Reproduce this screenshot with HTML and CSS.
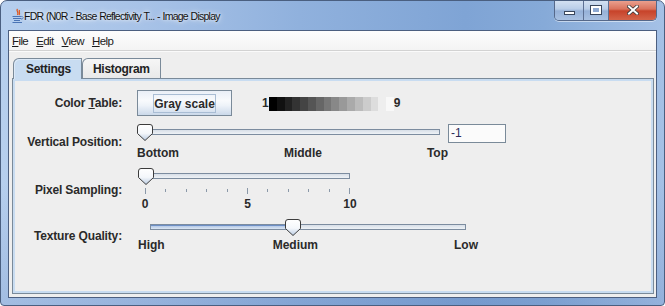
FILE: index.html
```html
<!DOCTYPE html>
<html>
<head>
<meta charset="utf-8">
<title>Image Display</title>
<link rel="stylesheet" href="styles.css">
</head>
<body>
<div class="window">
  <div class="titlebar">
    <svg class="app-icon" width="12" height="16" viewBox="0 0 12 16">
      <path d="M5.5 1 C3.5 3 7.5 4 5.5 7 M7.5 2 C6.5 4 8.5 5 7 7" fill="none" stroke="#e0561b" stroke-width="1.3"/>
      <path d="M0.5 8.5 H9.5 M1 10.5 H9 M2 12.5 H8 M0.5 14.5 H10" stroke="#4a74b5" stroke-width="1.2"/>
      <path d="M9.5 8.5 C12 8.5 12 11 9 11" fill="none" stroke="#4a74b5" stroke-width="1"/>
    </svg>
    <span class="title">FDR (N0R - Base Reflectivity T... - Image Display</span>
    <div class="caption-buttons">
      <div class="cbtn cmin"><span class="g-min"></span></div>
      <div class="cbtn cmax"><span class="g-max"></span></div>
      <div class="cbtn cclose">
        <svg width="12" height="10" viewBox="0 0 12 10">
          <path d="M2 1.5 L10 8.5 M10 1.5 L2 8.5" stroke="#3a3a3a" stroke-width="3.6" stroke-linecap="square"/>
          <path d="M2 1.5 L10 8.5 M10 1.5 L2 8.5" stroke="#ffffff" stroke-width="2" stroke-linecap="square"/>
        </svg>
      </div>
    </div>
  </div>
  <div class="client">
    <div class="menubar">
      <span class="menu"><u>F</u>ile</span>
      <span class="menu"><u>E</u>dit</span>
      <span class="menu"><u>V</u>iew</span>
      <span class="menu"><u>H</u>elp</span>
    </div>
    <div class="tabarea">
      <div class="tabs">
        <div class="tab tab-selected">Settings</div>
        <div class="tab">Histogram</div>
      </div>
      <div class="panel">
        <div class="form">
          <div class="lbl">Color <u>T</u>able:</div>
          <div class="ctrl ct-row">
            <div class="btn"><span class="focus">Gray scale</span></div>
            <span class="num num-1">1</span>
            <div class="scale-bar"></div>
            <span class="num">9</span>
          </div>

          <div class="lbl">Vertical Position:</div>
          <div class="ctrl vpos-row">
            <div class="slider vpos">
              <div class="slider-body">
                <div class="track track-vpos"></div>
                <svg class="thumb" style="left:0px" width="16" height="17" viewBox="0 0 16 17">
                  <defs>
                    <linearGradient id="tg" x1="0" y1="0" x2="0" y2="1">
                      <stop offset="0" stop-color="#ffffff"/>
                      <stop offset="0.55" stop-color="#f4f7fb"/>
                      <stop offset="1" stop-color="#b9cbe2"/>
                    </linearGradient>
                  </defs>
                  <path d="M0.5 3 Q0.5 0.5 3 0.5 H13 Q15.5 0.5 15.5 3 V9.5 L8 16.5 L0.5 9.5 Z" fill="url(#tg)" stroke="#3c3c3c"/>
                </svg>
              </div>
              <div class="slabels spread">
                <span>Bottom</span><span>Middle</span><span>Top</span>
              </div>
            </div>
            <div class="textfield">-1</div>
          </div>

          <div class="lbl">Pixel Sampling:</div>
          <div class="ctrl">
            <div class="slider pix">
              <div class="slider-body">
                <div class="track track-pix"></div>
                <svg class="thumb" style="left:0px" width="16" height="17" viewBox="0 0 16 17">
                  <path d="M0.5 3 Q0.5 0.5 3 0.5 H13 Q15.5 0.5 15.5 3 V9.5 L8 16.5 L0.5 9.5 Z" fill="url(#tg)" stroke="#3c3c3c"/>
                </svg>
              </div>
              <div class="ticks">
                <i class="major"></i><i></i><i></i><i></i><i></i><i class="major"></i><i></i><i></i><i></i><i></i><i class="major"></i>
              </div>
              <div class="slabels spread pix-labels">
                <span>0</span><span>5</span><span>10</span>
              </div>
            </div>
          </div>

          <div class="lbl">Texture Quality:</div>
          <div class="ctrl">
            <div class="slider tq">
              <div class="slider-body">
                <div class="track track-tq"><div class="fill" style="width:141px"></div></div>
                <svg class="thumb" style="left:147px" width="16" height="17" viewBox="0 0 16 17">
                  <path d="M0.5 3 Q0.5 0.5 3 0.5 H13 Q15.5 0.5 15.5 3 V9.5 L8 16.5 L0.5 9.5 Z" fill="url(#tg)" stroke="#3c3c3c"/>
                </svg>
              </div>
              <div class="slabels tq-labels">
                <span>High</span><span class="tq-mid">Medium</span><span class="tq-end">Low</span>
              </div>
            </div>
          </div>
        </div>
      </div>
    </div>
  </div>
</div>
</body>
</html>
```
FILE: styles.css
```css
html, body {
  margin: 0;
  padding: 0;
  background: #ffffff;
}

body {
  font-family: "Liberation Sans", Arial, sans-serif;
}

.window {
  width: 665px;
  height: 306px;
  box-sizing: border-box;
  border: 1px solid #4a5f80;
  border-radius: 7px 7px 4px 4px;
  padding: 0 7px 7px 7px;
  display: flex;
  flex-direction: column;
  overflow: hidden;
  background:
    linear-gradient(180deg, rgba(255,255,255,0) 0%, rgba(255,255,255,0) 60%, rgba(70,105,170,0.18) 100%),
    linear-gradient(90deg, #b6cfee 0%, #a7c2e7 22%, #90b1dd 45%, #7fa4d5 70%, #86aad8 82%, #a5c1e6 100%);
}

/* ---------- title bar ---------- */
.titlebar {
  height: 29px;
  display: flex;
  align-items: center;
}

.app-icon {
  margin-left: 4px;
  flex: none;
}

.title {
  margin-left: 0;
  font-family: "Liberation Sans", sans-serif;
  font-size: 10.5px;
  letter-spacing: -0.75px;
  word-spacing: 0.5px;
  color: #111;
  text-shadow: 0 0 6px rgba(255,255,255,0.9), 0 0 3px rgba(255,255,255,0.8);
  white-space: nowrap;
}

.caption-buttons {
  margin-left: auto;
  align-self: flex-start;
  margin-top: -1px;
  display: flex;
  height: 20px;
  border: 1px solid #55688a;
  border-top: none;
  border-radius: 0 0 5px 5px;
  overflow: hidden;
  box-shadow: 0 1px 0 rgba(255,255,255,0.5);
}

.cbtn {
  height: 20px;
  display: flex;
  align-items: center;
  justify-content: center;
  box-sizing: border-box;
}

.cmin {
  width: 29px;
  background: linear-gradient(180deg, #d6e3f3 0%, #b9cde8 45%, #96b1d8 55%, #a9c1e2 100%);
  border-right: 1px solid #5d7093;
}

.cmax {
  width: 25px;
  background: linear-gradient(180deg, #d6e3f3 0%, #b9cde8 45%, #96b1d8 55%, #a9c1e2 100%);
  border-right: 1px solid #5d7093;
}

.cclose {
  width: 47px;
  background: linear-gradient(180deg, #eba594 0%, #d9735d 45%, #c7432a 55%, #d4644a 100%);
}

.g-min {
  display: block;
  width: 9px;
  height: 2px;
  margin-top: 6px;
  background: #fff;
  border: 1px solid #39465c;
}

.g-max {
  display: block;
  width: 6px;
  height: 4px;
  border: 2px solid #fff;
  outline: 1px solid #39465c;
  background: #8ea9d2;
}

/* ---------- client ---------- */
.client {
  flex: 1;
  display: flex;
  flex-direction: column;
  background: #eeeeee;
  border: 1px solid #4c5f80;
  min-height: 0;
}

.menubar {
  height: 19px;
  display: flex;
  align-items: center;
  gap: 8px;
  padding-left: 3px;
  background: linear-gradient(180deg, #fdfdfd 0%, #f4f4f4 100%);
  border-bottom: 1px solid #d2d2d2;
  box-shadow: 0 1px 0 #fafafa;
}

.menu {
  font-family: "Liberation Sans", sans-serif;
  font-size: 11.5px;
  letter-spacing: -0.6px;
  color: #1a1a1a;
}

.tabarea {
  flex: 1;
  display: flex;
  flex-direction: column;
  padding: 7px 2px 3px 3px;
  min-height: 0;
}

.tabs {
  display: flex;
  height: 20px;
  padding-left: 1px;
  position: relative;
  z-index: 1;
}

.tab {
  box-sizing: border-box;
  height: 20px;
  padding: 0 9px 0 10px;
  border: 1px solid #7a8a99;
  border-bottom: none;
  border-radius: 6px 0 0 0;
  background: linear-gradient(180deg, #f6f6f6 0%, #e9e9e9 100%);
  font-size: 12px;
  font-weight: bold;
  letter-spacing: -0.3px;
  color: #222;
  display: flex;
  align-items: center;
}

.tab-selected {
  width: 69px;
  padding-left: 12px;
  height: 21px;
  background: #c8dcf1;
  box-shadow: inset 1px 1px 0 #dce9f7;
  border-right: 1px solid #7a8a99;
}

.tab + .tab {
  margin-left: 0;
  width: 79px;
}

.panel {
  flex: 1;
  border: 1px solid #7a8a99;
  box-shadow: inset 0 0 0 2px #c8dcf1;
  min-height: 0;
}

/* ---------- form ---------- */
.form {
  display: grid;
  grid-template-columns: 109px auto;
  column-gap: 15px;
  row-gap: 8px;
  padding-top: 11px;
  align-items: center;
  justify-content: start;
}

.lbl, .slabels, .btn, .num {
  font-size: 12px;
  font-weight: bold;
  color: #2a2a2a;
}

.lbl {
  text-align: right;
  white-space: nowrap;
  letter-spacing: -0.15px;
}

.ctrl {
  display: flex;
}

.ct-row {
  align-items: center;
  height: 26px;
}

.btn {
  box-sizing: border-box;
  width: 95px;
  height: 26px;
  border: 1px solid #7a8a99;
  background: linear-gradient(180deg, #e9eff7 0%, #f8fafd 40%, #eef3f9 60%, #cbd9ea 100%);
  display: flex;
  align-items: center;
  justify-content: center;
}

.focus {
  border: 1px solid #a9bdd4;
  padding: 2px 0 1px 0;
  line-height: 14px;
}

.num-1 {
  margin-left: 30px;
}

.scale-bar {
  width: 125px;
  height: 14px;
  margin-top: 2px;
  background: linear-gradient(90deg,
    #000000 0 6.25%, #111111 6.25% 12.5%, #222222 12.5% 18.75%, #333333 18.75% 25%,
    #444444 25% 31.25%, #555555 31.25% 37.5%, #666666 37.5% 43.75%, #777777 43.75% 50%,
    #888888 50% 56.25%, #999999 56.25% 62.5%, #aaaaaa 62.5% 68.75%, #bbbbbb 68.75% 75%,
    #cccccc 75% 81.25%, #dddddd 81.25% 87.5%, #eeeeee 87.5% 93.75%, #f8f8f8 93.75% 100%);
}

/* sliders */
.slider {
  display: flex;
  flex-direction: column;
}

.slider-body {
  position: relative;
  height: 17px;
}

.thumb {
  position: absolute;
  top: 0;
  display: block;
}

.track {
  box-sizing: border-box;
  height: 6px;
  margin-top: 5px;
  border: 1px solid #7c8c9f;
  background: linear-gradient(180deg, #d7dee7 0%, #eef2f6 100%);
  position: relative;
  overflow: hidden;
}

.fill {
  height: 100%;
  background: linear-gradient(180deg, #a7bfe2 0%, #dbe6f4 100%);
  box-shadow: inset 0 1px 0 #6d8fc6;
}

.slabels {
  display: flex;
  line-height: 14px;
}

.spread {
  justify-content: space-between;
}

.vpos-row {
  align-items: flex-start;
}

.vpos {
  width: 311px;
}

.track-vpos {
  margin-left: 8px;
  margin-right: 8px;
}

.vpos .slabels {
  margin-top: 5px;
}

.textfield {
  box-sizing: border-box;
  width: 58px;
  height: 19px;
  border: 1px solid #7a8a99;
  background: #fbfbfb;
  font-size: 12px;
  color: #2b2b5a;
  padding-left: 2px;
  line-height: 17px;
}

.pix {
  width: 219px;
  margin-left: 1px;
}

.track-pix {
  margin-left: 7px;
  margin-right: 7px;
}

.ticks {
  display: flex;
  justify-content: space-between;
  align-items: flex-start;
  margin: 3px 7px 0 7px;
  height: 6px;
}

.ticks i {
  display: block;
  width: 1px;
  height: 3px;
  margin-top: 1px;
  background: #8a98a8;
}

.ticks i.major {
  height: 6px;
  margin-top: 0;
}

.pix-labels {
  margin-top: 3px;
}

.pix-labels span {
  width: 14px;
  text-align: center;
}

.tq {
  width: 340px;
  margin-left: 1px;
}

.track-tq {
  margin-left: 12px;
  margin-right: 12px;
}

.tq-labels {
  margin-top: 2px;
}

.tq-mid {
  margin-left: 108px;
}

.tq-end {
  margin-left: auto;
}
```
